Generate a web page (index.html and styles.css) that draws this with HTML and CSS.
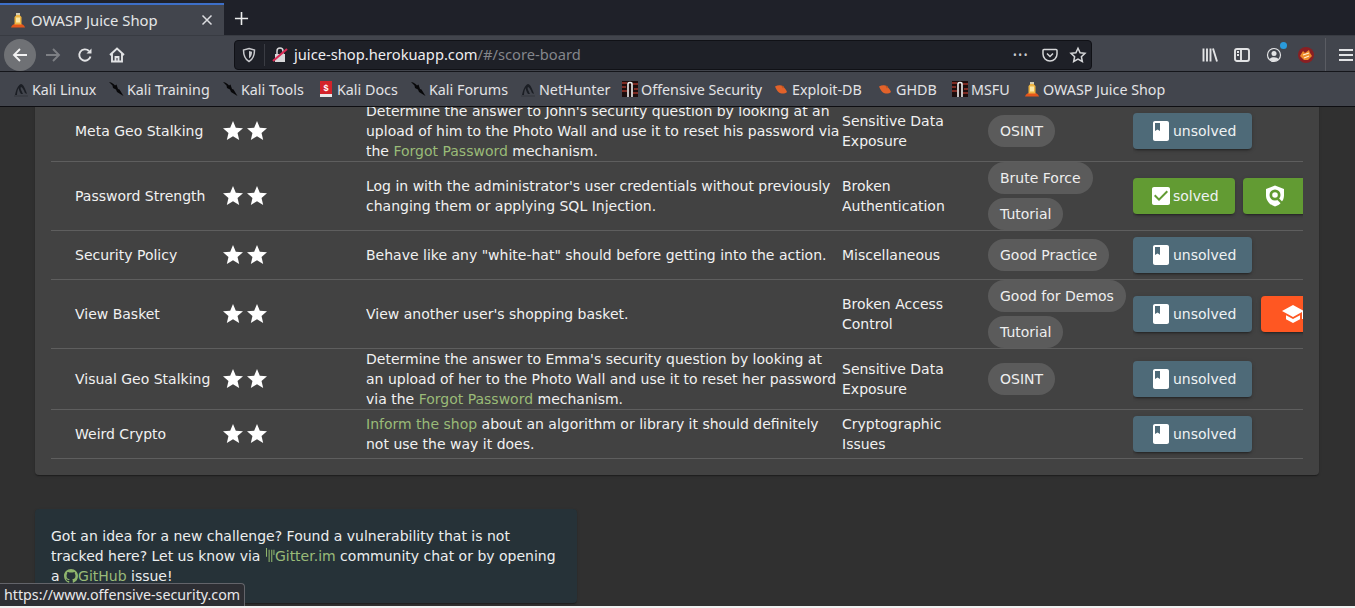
FILE: index.html
```html
<!DOCTYPE html>
<html lang="en">
<head>
<meta charset="utf-8">
<title>OWASP Juice Shop</title>
<link rel="stylesheet" href="styles.css">
</head>
<body>
<svg class="defs" aria-hidden="true">
  <symbol id="juice" viewBox="0 0 16 16"><path d="M1 15.500c.5-2 2-3 3.500-3.500h7c1.500.5 3 1.500 3.500 3.500z" fill="#e4561b"/><path d="M4.500 12.500V5L6 3.500V1h4v2.500L11.500 5v7.500z" fill="#eeb544"/><rect x="6" y="1" width="4" height="2" fill="#d4cdb4"/><rect x="6" y="5.500" width="4" height="5" fill="#fbe9a8"/></symbol>
  <symbol id="kali" viewBox="0 0 16 16"><path d="M1 1c3 .5 5 2 6 3.500L8.500 3.500 10 8l1.500.5L15.500 15 9 11 8 8.500 5 7 4.500 4.500z" fill="#08080a"/></symbol>
  <symbol id="hunter" viewBox="0 0 16 16"><path d="M2 14C3 9 5 4 8 3c2 0 4 4 6 10l-2-1C11 9 9 6 8 6c-1 1 0 3 2 7H8C6 10 6 8 5.500 7 4.500 9 4 12 4 14z" fill="#1b1e24"/><path d="M1 15h14" stroke="#33363d"/></symbol>
  <symbol id="docs" viewBox="0 0 16 16"><rect x="2" y="0" width="12" height="13" fill="#d3232a"/><rect x="2" y="13" width="12" height="3" fill="#e8e8e8"/><text x="8" y="9.500" class="docs-mark">$</text></symbol>
  <symbol id="offsec" viewBox="0 0 16 16"><rect width="16" height="16" fill="#1c0d0d"/><path d="M0 2h5M0 6h4M0 10h5M11 3h5M12 8h4M11 12h5" stroke="#7c2a22" stroke-width="2"/><path d="M6 16V3c0-2 4-2 4 0v13" fill="none" stroke="#f0f0f0" stroke-width="1.600"/></symbol>
  <symbol id="exploit" viewBox="0 0 16 16"><path d="M2 5.500c2-1 4-1.500 6-1 3 1 5 4 6 6.500-2 2-6 2-8 .5C4.500 10.500 3 8 2 5.500z" fill="#e2622a"/><path d="M8 4l3 1.500-1 2z" fill="#b9521f"/></symbol>
  <symbol id="book" viewBox="0 0 24 24"><path fill-rule="evenodd" d="M18 2H6c-1.100 0-2 .9-2 2v16c0 1.100.9 2 2 2h12c1.100 0 2-.9 2-2V4c0-1.100-.9-2-2-2zM6 4h5v8l-2.500-1.500L6 12V4z"/></symbol>
  <symbol id="star" viewBox="0 0 24 24"><path d="M12 17.270L18.180 21l-1.640-7.030L22 9.240l-7.190-.61L12 2 9.190 8.630 2 9.240l5.460 4.730L5.820 21z"/></symbol>
</svg>

<div class="window">
  <header class="chrome">
    <div class="tabbar">
      <div class="tab">
        <svg class="fav"><use href="#juice"/></svg>
        <span class="tab-title">OWASP Juice Shop</span>
        <svg class="tab-close" viewBox="0 0 12 12"><path d="M1.500 1.500l9 9M10.500 1.500l-9 9"/></svg>
      </div>
      <svg class="new-tab" viewBox="0 0 16 16"><path d="M8 1v14M1 8h14"/></svg>
    </div>
    <div class="toolbar">
      <button class="nav nav-back"><svg viewBox="0 0 16 16"><path d="M15 8H2M8 2L2 8l6 6"/></svg></button>
      <button class="nav nav-fwd"><svg viewBox="0 0 16 16"><path d="M1 8h13M8 2l6 6-6 6"/></svg></button>
      <button class="nav"><svg viewBox="0 0 16 16"><path d="M13.500 9.500A5.700 5.700 0 1 1 12 4"/><path class="solid" d="M14.500 1.500v5h-5z"/></svg></button>
      <button class="nav"><svg viewBox="0 0 16 16"><path d="M1 8l7-6.500L15 8M3 6.500V14.500h10V6.500M6.500 14.500V10h3v4.500"/></svg></button>
      <div class="urlbar">
        <svg class="url-shield" viewBox="0 0 16 16"><path d="M8 1.500l5.500 1.500c0 5-1 9-5.500 11.500C3.500 12 2.500 8 2.500 3z"/><path class="fill" d="M8 4l3 .8c0 3-.6 5-3 6.700z"/></svg>
        <span class="url-div"></span>
        <svg class="url-lock" viewBox="0 0 16 16"><path class="lock-b" d="M3 7h10v8H3z"/><path class="lock-s" d="M5 7V4a3 3 0 0 1 6 0v3"/><path class="lock-x" d="M1 14L15 2"/></svg>
        <span class="url-text">juice-shop.herokuapp.com<span class="url-path">/#/score-board</span></span>
        <span class="url-dots">•••</span>
        <svg class="url-pocket" viewBox="0 0 16 16"><path d="M2 2.500h12a1 1 0 0 1 1 1V7a7 7 0 0 1-14 0V3.500a1 1 0 0 1 1-1z"/><path d="M5 6.500l3 3 3-3"/></svg>
        <svg class="url-star" viewBox="0 0 24 24"><path d="M12 3l2.800 6 6.500.8-4.800 4.400 1.300 6.500L12 17.400l-5.800 3.300 1.300-6.500-4.800-4.400 6.500-.8z"/></svg>
      </div>
      <button class="tool tool-first"><svg viewBox="0 0 16 16"><path d="M1.500 1.500v13M5 1.500v13M8.500 1.500v13M11 1.500l4 13"/></svg></button>
      <button class="tool"><svg viewBox="0 0 16 16"><rect x="1" y="2" width="14" height="12" rx="2"/><path d="M7 2v12M3 5h2M3 8h2"/></svg></button>
      <button class="tool tool-acct"><svg viewBox="0 0 16 16"><circle cx="8" cy="8" r="6.500"/><circle class="solid" cx="8" cy="6.500" r="2.500"/><path class="solid" d="M3.500 12.500c1-3 8-3 9 0-2 2-7 2-9 0z"/></svg><span class="acct-dot"></span></button>
      <button class="tool"><svg class="fx" viewBox="0 0 16 16"><circle cx="8" cy="8" r="8" fill="#8a1f22"/><path d="M2 9l3-5 2 2 4-3 1 3 2 3-4 4H6z" fill="#ee8a2a"/><path d="M5 8l6-2M6 11l5-2" stroke="#fff0d0" stroke-width="1.200"/></svg></button>
      <span class="tool-sep"></span>
      <button class="tool tool-menu"><svg viewBox="0 0 16 16"><path d="M1 3h14M1 8h14M1 13h14"/></svg></button>
    </div>
    <nav class="bookmarks">
      <a class="bm"><svg><use href="#hunter"/></svg>Kali Linux</a>
      <a class="bm"><svg><use href="#kali"/></svg>Kali Training</a>
      <a class="bm"><svg><use href="#kali"/></svg>Kali Tools</a>
      <a class="bm"><svg><use href="#docs"/></svg>Kali Docs</a>
      <a class="bm"><svg><use href="#kali"/></svg>Kali Forums</a>
      <a class="bm"><svg><use href="#hunter"/></svg>NetHunter</a>
      <a class="bm"><svg><use href="#offsec"/></svg>Offensive Security</a>
      <a class="bm"><svg><use href="#exploit"/></svg>Exploit-DB</a>
      <a class="bm"><svg><use href="#exploit"/></svg>GHDB</a>
      <a class="bm"><svg><use href="#offsec"/></svg>MSFU</a>
      <a class="bm"><svg><use href="#juice"/></svg>OWASP Juice Shop</a>
    </nav>
  </header>

  <main class="viewport">
    <section class="card board">
      <table class="challenges">
        <colgroup>
          <col class="c-name"><col class="c-stars"><col class="c-desc"><col class="c-cat"><col class="c-tags"><col class="c-act">
        </colgroup>
        <tbody>
          <tr>
            <td class="name">Meta Geo Stalking</td>
            <td><div class="stars"><svg><use href="#star"/></svg><svg><use href="#star"/></svg></div></td>
            <td>Determine the answer to John's security question by looking at an upload of him to the Photo Wall and use it to reset his password via the <a class="link">Forgot Password</a> mechanism.</td>
            <td>Sensitive Data Exposure</td>
            <td><div class="chips"><span class="chip">OSINT</span></div></td>
            <td><div class="actions"><span class="btn unsolved"><svg><use href="#book"/></svg>unsolved</span></div></td>
          </tr>
          <tr>
            <td class="name">Password Strength</td>
            <td><div class="stars"><svg><use href="#star"/></svg><svg><use href="#star"/></svg></div></td>
            <td>Log in with the administrator's user credentials without previously changing them or applying SQL Injection.</td>
            <td>Broken Authentication</td>
            <td><div class="chips"><span class="chip">Brute Force</span><span class="chip">Tutorial</span></div></td>
            <td><div class="actions">
              <span class="btn solved"><svg viewBox="0 0 24 24"><path fill-rule="evenodd" d="M19 3H5c-1.110 0-2 .9-2 2v14c0 1.100.89 2 2 2h14c1.110 0 2-.9 2-2V5c0-1.100-.89-2-2-2zm-9 14l-5-5 1.410-1.410L10 14.170l7.590-7.590L19 8l-9 9z"/></svg>solved</span>
              <span class="btn icon solved"><svg viewBox="0 0 24 24"><path fill-rule="evenodd" d="M12 1.500L21 5v6.500c0 5-3.800 9.600-9 11-5.200-1.400-9-6-9-11V5zM12 5.500a5.500 5.500 0 1 0 0 11 5.500 5.500 0 0 0 0-11zM12 8.200a2.800 2.800 0 1 1 0 5.600 2.800 2.800 0 0 1 0-5.600z"/><path class="shield-handle" d="M15 15l4 4"/></svg></span>
            </div></td>
          </tr>
          <tr>
            <td class="name">Security Policy</td>
            <td><div class="stars"><svg><use href="#star"/></svg><svg><use href="#star"/></svg></div></td>
            <td>Behave like any "white-hat" should before getting into the action.</td>
            <td>Miscellaneous</td>
            <td><div class="chips"><span class="chip">Good Practice</span></div></td>
            <td><div class="actions"><span class="btn unsolved"><svg><use href="#book"/></svg>unsolved</span></div></td>
          </tr>
          <tr>
            <td class="name">View Basket</td>
            <td><div class="stars"><svg><use href="#star"/></svg><svg><use href="#star"/></svg></div></td>
            <td>View another user's shopping basket.</td>
            <td>Broken Access Control</td>
            <td><div class="chips"><span class="chip">Good for Demos</span><span class="chip">Tutorial</span></div></td>
            <td><div class="actions">
              <span class="btn unsolved"><svg><use href="#book"/></svg>unsolved</span>
              <span class="btn icon tutorial"><svg viewBox="0 0 24 24"><path d="M5 13.180v4L12 21l7-3.820v-4L12 17l-7-3.820zM12 3L1 9l11 6 9-4.910V17h2V9L12 3z"/></svg></span>
            </div></td>
          </tr>
          <tr>
            <td class="name">Visual Geo Stalking</td>
            <td><div class="stars"><svg><use href="#star"/></svg><svg><use href="#star"/></svg></div></td>
            <td>Determine the answer to Emma's security question by looking at an upload of her to the Photo Wall and use it to reset her password via the <a class="link">Forgot Password</a> mechanism.</td>
            <td>Sensitive Data Exposure</td>
            <td><div class="chips"><span class="chip">OSINT</span></div></td>
            <td><div class="actions"><span class="btn unsolved"><svg><use href="#book"/></svg>unsolved</span></div></td>
          </tr>
          <tr>
            <td class="name">Weird Crypto</td>
            <td><div class="stars"><svg><use href="#star"/></svg><svg><use href="#star"/></svg></div></td>
            <td><a class="link">Inform the shop</a> about an algorithm or library it should definitely not use the way it does.</td>
            <td>Cryptographic Issues</td>
            <td></td>
            <td><div class="actions"><span class="btn unsolved"><svg><use href="#book"/></svg>unsolved</span></div></td>
          </tr>
        </tbody>
      </table>
    </section>

    <section class="card idea">
      Got an idea for a new challenge? Found a vulnerability that is not tracked here? Let us know via <a class="link"><svg class="gitter" viewBox="0 0 10 16"><path d="M1 0v10M4 2v14M7 2v14M9.500 2v6"/></svg>Gitter.im</a> community chat or by opening a <a class="link"><svg class="github" viewBox="0 0 16 16"><path d="M8 0C3.580 0 0 3.580 0 8c0 3.540 2.290 6.530 5.470 7.590.4.070.55-.17.55-.38 0-.19-.01-.82-.01-1.490-2.010.37-2.530-.49-2.690-.94-.09-.23-.48-.94-.82-1.130-.28-.15-.68-.52-.01-.53.630-.01 1.080.58 1.230.82.720 1.210 1.870.87 2.330.66.070-.52.280-.87.510-1.070-1.780-.2-3.640-.89-3.640-3.950 0-.87.310-1.590.820-2.150-.08-.2-.36-1.020.080-2.120 0 0 .67-.21 2.200.82.640-.18 1.320-.27 2-.27.680 0 1.360.09 2 .27 1.530-1.040 2.200-.82 2.200-.82.440 1.100.160 1.920.080 2.120.510.560.820 1.270.820 2.150 0 3.070-1.870 3.750-3.650 3.950.290.250.540.730.540 1.480 0 1.070-.01 1.930-.01 2.200 0 .210.150.460.550.380A8.013 8.013 0 0016 8c0-4.420-3.580-8-8-8z"/></svg>GitHub</a> issue!
    </section>
  </main>
  <div class="window-edge"></div>
  <div class="status">https://www.offensive-security.com</div>
</div>
</body>
</html>
```
FILE: styles.css
```css
* { box-sizing: border-box; }
html, body { margin: 0; padding: 0; overflow: hidden; }
.defs { position: absolute; width: 0; height: 0; }
.docs-mark { font: 700 9px "Liberation Sans", sans-serif; fill: #fff; text-anchor: middle; }

.window {
  position: relative;
  width: 1355px;
  height: 608px;
  display: flex;
  flex-direction: column;
  overflow: hidden;
  background: #303030;
  font-family: "DejaVu Sans", sans-serif;
}

/* Browser chrome */
.chrome {
  flex: none;
  height: 107px;
  display: flex;
  flex-direction: column;
  font-family: "Noto Sans", sans-serif;
  color: #e6e7e9;
  border-bottom: 1px solid #0e0e12;
}
.tabbar {
  height: 35px;
  padding-top: 3px;
  display: flex;
  align-items: stretch;
  background: #1f2129;
}
.tab {
  width: 224px;
  display: flex;
  align-items: center;
  padding-left: 10px;
  background: #42454d;
  border-top: 2px solid #3d6fc8;
}
.fav { width: 16px; height: 16px; flex: none; }
.tab-title { margin-left: 5px; font-size: 14.800px; flex: 1; color: #e4e5e7; }
.tab-close { width: 12px; height: 12px; margin-right: 11px; fill: none; stroke: #dcdde0; stroke-width: 1.500; }
.new-tab { width: 15px; height: 15px; margin: 8px 0 0 10px; fill: none; stroke: #eceded; stroke-width: 1.700; }

.toolbar {
  height: 36px;
  display: flex;
  align-items: center;
  padding-left: 4px;
  padding-top: 3px;
  background: #42454d;
  border-top: 1px solid #383b42;
}
.nav, .tool {
  flex: none;
  width: 32px;
  height: 32px;
  padding: 0;
  border: 0;
  background: none;
  display: flex;
  align-items: center;
  justify-content: center;
  position: relative;
}
.nav svg, .tool svg { width: 16px; height: 16px; fill: none; stroke: #e2e3e5; stroke-width: 1.900; }
.nav .solid, .tool .solid { fill: #e2e3e5; stroke: none; }
.nav-back { border-radius: 50%; background: #6f7175; }
.nav-back svg { stroke: #f2f2f2; }
.nav-fwd { margin-left: 1px; }
.nav-fwd svg { stroke: #7d7f84; }

.urlbar {
  flex: none;
  width: 858px;
  height: 30px;
  margin-left: 101px;
  display: flex;
  align-items: center;
  padding-left: 6px;
  background: #1e2027;
  border: 1px solid #101116;
  border-radius: 4px;
}
.url-shield { width: 16px; height: 16px; flex: none; fill: none; stroke: #c8c9cc; stroke-width: 1.500; }
.url-shield .fill { fill: #c8c9cc; stroke: none; }
.url-div { width: 1px; height: 22px; margin: 0 7px; background: #3a3c43; }
.url-lock { width: 16px; height: 16px; flex: none; }
.lock-b { fill: #d8d8da; }
.lock-s { fill: none; stroke: #d8d8da; stroke-width: 1.500; }
.lock-x { stroke: #d92b55; stroke-width: 2.200; }
.url-text { margin-left: 6px; font-size: 14.700px; line-height: 20px; padding-bottom: 2px; color: #eeeef0; flex: 1; }
.url-path { color: #84868b; }
.url-dots { font-size: 10px; letter-spacing: 1.500px; color: #c9cacd; width: 20px; margin-right: 11px; text-align: center; white-space: nowrap; }
.url-pocket { width: 16px; height: 16px; flex: none; fill: none; stroke: #d6d7d9; stroke-width: 1.500; margin-right: 11px; }
.url-star { width: 18px; height: 18px; flex: none; fill: none; stroke: #d6d7d9; stroke-width: 2; margin-right: 4px; }
.tool-first { margin-left: 102px; }
.tool .fx { stroke: none; }
.tool-acct svg { stroke-width: 1.200; }
.acct-dot {
  position: absolute;
  top: 3px;
  right: 3px;
  width: 7px;
  height: 7px;
  border-radius: 50%;
  background: #2a9bdc;
}
.tool-sep { flex: none; width: 1px; height: 34px; margin-left: 3px; background: #5a5c63; }
.tool-menu { margin-left: 4px; }

.bookmarks {
  flex: 1;
  display: grid;
  grid-template-columns: 95px 114px 96px 92px 110px 102px 151px 104px 75px 72px max-content;
  align-items: center;
  padding-left: 13px;
  background: #42454d;
  border-top: 1px solid #15161b;
  font-size: 14.300px;
  white-space: nowrap;
}
.bm { display: flex; align-items: center; gap: 3px; color: #e2e3e6; }
.bm svg { width: 16px; height: 16px; flex: none; }

/* Page */
.viewport {
  flex: 1;
  min-height: 0;
  overflow: hidden;
  background: #303030;
  color: #f1f1f1;
  font-size: 14px;
  line-height: 20px;
}
.card {
  background: #424242;
  border-radius: 4px;
  box-shadow: 0 2px 1px -1px rgba(0,0,0,.2), 0 1px 1px rgba(0,0,0,.14), 0 1px 3px rgba(0,0,0,.12);
}
.board { margin: -6px 36px 0 35px; padding: 0 16px 16px; }
.challenges {
  width: 1252px;
  table-layout: fixed;
  border-collapse: separate;
  border-spacing: 0;
}
.c-name { width: 171px; }
.c-stars { width: 144px; }
.c-desc { width: 476px; }
.c-cat { width: 146px; }
.c-tags { width: 145px; }
.c-act { width: 170px; }
.challenges td {
  height: 49px;
  padding: 0;
  vertical-align: middle;
  border-bottom: 1px solid #5e5e5e;
  overflow: hidden;
}
.challenges td.name { padding-left: 24px; }
.stars { display: flex; margin-left: -1px; }
.stars svg { width: 24px; height: 24px; fill: #fff; }
.link { color: #9abb78; }
.chips { display: flex; flex-direction: column; align-items: flex-start; gap: 4px; }
.chip {
  height: 32px;
  display: flex;
  align-items: center;
  padding: 0 12px;
  border-radius: 16px;
  background: #5b5b5b;
  color: #eee;
  white-space: nowrap;
}
.actions { display: flex; align-items: center; gap: 8px; width: 220px; }
.btn {
  flex: none;
  height: 36px;
  display: flex;
  align-items: center;
  padding: 0 16px;
  border-radius: 4px;
  color: #eef2f3;
  box-shadow: 0 3px 1px -2px rgba(0,0,0,.2), 0 2px 2px rgba(0,0,0,.14), 0 1px 5px rgba(0,0,0,.12);
}
.btn svg { width: 24px; height: 24px; fill: #fff; flex: none; }
.btn.icon { width: 64px; justify-content: center; padding: 0; }
.unsolved { background: #4e6a78; }
.solved { background: #629b33; }
.tutorial { background: #ff5722; margin-left: 1px; }
.shield-handle { stroke: #629b33; stroke-width: 2.400; fill: none; }
.idea {
  width: 542px;
  height: 94px;
  margin: 34px 0 0 35px;
  padding: 17px 16px 0;
  background: #263238;
  color: #eceeef;
}
.gitter { width: 10px; height: 14px; vertical-align: -1px; fill: none; stroke: #8fb56c; stroke-width: 1.200; }
.github { width: 14px; height: 14px; fill: #8fb56c; vertical-align: -2px; }

.window-edge { flex: none; height: 2px; background: #f0f0f0; }
.status {
  position: absolute;
  left: 0;
  bottom: 2px;
  height: 23px;
  padding: 0 4px 2px;
  display: flex;
  align-items: center;
  background: #2d2e33;
  border: 1px solid #63646a;
  border-left: 0;
  border-bottom: 0;
  border-top-right-radius: 4px;
  font-family: "Noto Sans", sans-serif;
  font-size: 14.250px;
  color: #e8e8ea;
}
```
